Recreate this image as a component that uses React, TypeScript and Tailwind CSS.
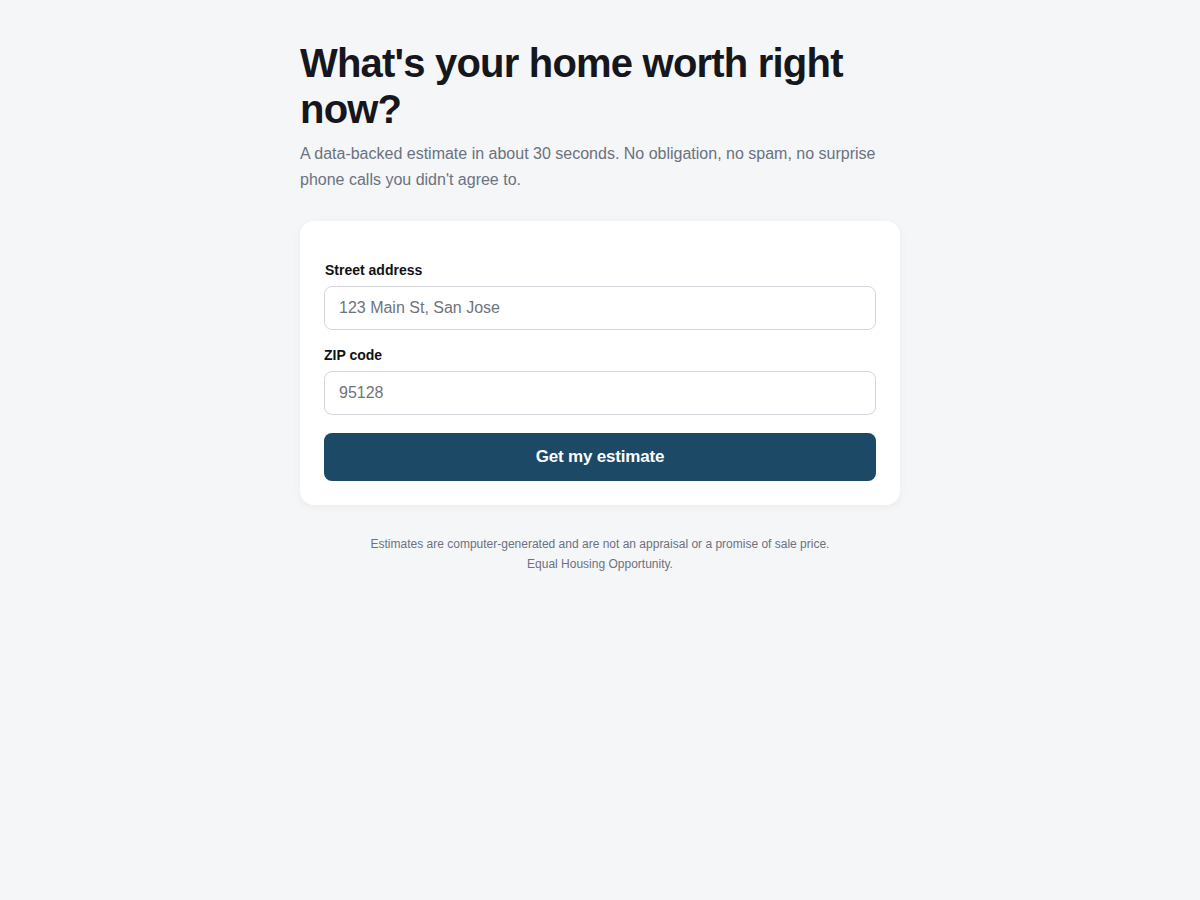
import React from "react";

export default function App() {
  return (
    <div className="min-h-screen bg-[#f5f6f8] [font-family:'Liberation_Sans',Arial,sans-serif]">
      <div className="mx-auto w-[600px] pt-10">
        <h1 className="text-[40px] font-bold leading-[46px] tracking-[-0.8px] text-[#16161d]">
          What's your home worth right now?
        </h1>
        <p className="mt-[9px] text-[16px] leading-[26px] text-[#6b7280]">
          A data-backed estimate in about 30 seconds. No obligation, no spam, no surprise phone calls you didn't agree to.
        </p>
        <div className="mt-7 rounded-[14px] bg-white px-6 pb-6 pt-[41px] shadow-[0_2px_10px_rgba(0,0,0,0.05)]">
          <label className="block pl-px text-[14px] font-bold leading-4 text-[#111]">Street address</label>
          <input
            className="mt-2 block h-[44px] w-full rounded-lg border border-[#d4d6dc] bg-white px-[14px] text-[16px] text-[#111] outline-none placeholder:text-[#6f737b]"
            placeholder="123 Main St, San Jose"
          />
          <label className="mt-[17px] block text-[14px] font-bold leading-4 text-[#111]">ZIP code</label>
          <input
            className="mt-2 block h-[44px] w-full rounded-lg border border-[#d4d6dc] bg-white px-[14px] text-[16px] text-[#111] outline-none placeholder:text-[#6f737b]"
            placeholder="95128"
          />
          <button className="mt-[18px] block h-12 w-full rounded-lg bg-[#1c4966] text-[17px] font-bold tracking-[-0.2px] text-white">
            Get my estimate
          </button>
        </div>
        <p className="mt-[29px] text-center text-[12px] leading-5 text-[#6b7280]">
          Estimates are computer-generated and are not an appraisal or a promise of sale price.
          <br />
          Equal Housing Opportunity.
        </p>
      </div>
    </div>
  );
}
